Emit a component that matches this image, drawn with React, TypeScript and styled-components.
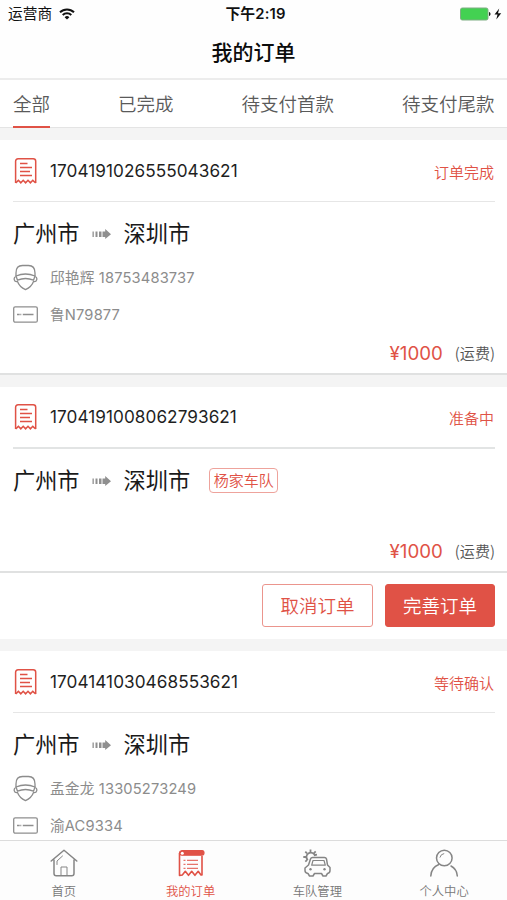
import React from "react";
import styled, { createGlobalStyle } from "styled-components";

const red = "#e05246";
const grey = "#8c8c8c";

const GlobalStyle = createGlobalStyle`
  * { box-sizing: border-box; }
  body {
    margin: 0;
    background: #f4f4f4;
    font-family: Inter, "Noto Sans CJK SC", sans-serif;
    color: #1c1c1c;
  }
`;

const Screen = styled.div`
  width: 507px;
  height: 900px;
  display: flex;
  flex-direction: column;
  overflow: hidden;
  background: #f4f4f4;
`;

const StatusBar = styled.div`
  height: 27px;
  flex: none;
  display: grid;
  grid-template-columns: 1fr auto 1fr;
  align-items: center;
  padding: 0 5px 0 8px;
  background: #fefefe;
  font-size: 14.7px;
  line-height: 27px;
  color: #111;
`;

const Carrier = styled.div`
  display: flex;
  align-items: center;
  gap: 7px;
  span { padding-top: 2px; line-height: 25px; }
`;

const Clock = styled.div`
  padding: 2px 0 0 1px;
  font-size: 14.8px;
  font-weight: 600;
  line-height: 25px;
  letter-spacing: 0.15px;
`;

const Power = styled.div`
  display: flex;
  justify-content: flex-end;
`;

const Header = styled.header`
  height: 53px;
  flex: none;
  display: flex;
  align-items: center;
  justify-content: center;
  background: #fefefe;
  border-bottom: 2px solid #ececec;
  font-size: 21px;
  font-weight: 500;
  line-height: 50px;
  color: #0c0c0c;
`;

const Tabs = styled.nav`
  height: 48px;
  flex: none;
  display: flex;
  justify-content: space-between;
  padding: 0 12.5px 0 13px;
  background: #fff;
  border-bottom: 1px solid #e4e4e4;
`;

const Tab = styled.div<{ $active?: boolean }>`
  height: 48px;
  font-size: 18.5px;
  font-weight: 350;
  line-height: 48px;
  color: #5a5a5a;
  border-bottom: 2px solid ${(p) => (p.$active ? red : "transparent")};
`;

const Orders = styled.main`
  flex: 1;
  min-height: 0;
  display: flex;
  flex-direction: column;
  gap: 12px;
  padding-top: 12px;
  overflow: hidden;
`;

const Card = styled.section<{ $height: number }>`
  height: ${(p) => p.$height}px;
  flex: none;
  display: flex;
  flex-direction: column;
  background: #fff;
`;

const CardHead = styled.div<{ $strong?: boolean }>`
  height: 62px;
  flex: none;
  display: flex;
  align-items: center;
  margin: 0 12px 0 13px;
  border-bottom: ${(p) => (p.$strong ? "2px solid #e2e4e4" : "1px solid #e6e6e6")};
`;

const OrderNo = styled.div`
  margin-left: 12px;
  font-size: 17.2px;
  letter-spacing: 0.05px;
  line-height: 24px;
  color: #1f1f1f;
`;

const Status = styled.div`
  margin-left: auto;
  padding: 4px 1px 0 0;
  font-size: 15px;
  line-height: 24px;
  font-weight: 350;
  color: ${red};
`;

const Route = styled.div`
  height: 63px;
  flex: none;
  display: flex;
  align-items: center;
  padding-left: 13px;
  font-size: 22.2px;
  font-weight: 400;
  line-height: 32px;
  color: #1a1a1a;
  svg { margin: 0 13px 0 12px; }
`;

const Team = styled.span`
  height: 25px;
  margin: -1px 0 0 19px;
  padding: 0 3.5px;
  border: 1px solid #eea39c;
  border-radius: 4px;
  font-size: 15px;
  font-weight: 350;
  line-height: 24px;
  color: ${red};
`;

const Detail = styled.div`
  height: 25px;
  flex: none;
  display: flex;
  align-items: center;
  gap: 12px;
  padding-left: 13px;
  font-size: 14.7px;
  letter-spacing: 0.15px;
  line-height: 22px;
  color: ${grey};
  & + & { margin-top: 12px; }
`;

const Price = styled.div`
  display: flex;
  flex: none;
  align-items: center;
  justify-content: flex-end;
  gap: 12px;
  height: 41px;
  margin-top: auto;
  padding-right: 12px;
  border-bottom: 2px solid #e0e1e1;
`;

const Amount = styled.span`
  font-size: 18.7px;
  line-height: 24px;
  color: ${red};
`;

const Fee = styled.span`
  padding-bottom: 4px;
  font-family: "Noto Sans CJK SC", sans-serif;
  font-size: 15.1px;
  font-weight: 350;
  line-height: 24px;
  color: #555;
`;

const Actions = styled.div`
  height: 66px;
  flex: none;
  display: flex;
  justify-content: flex-end;
  align-items: flex-start;
  gap: 12px;
  padding: 11px 12px 0 0;
`;

const Button = styled.button<{ $primary?: boolean }>`
  width: ${(p) => (p.$primary ? 110 : 111)}px;
  height: 43px;
  padding: 2px 0 0;
  border: 1px solid ${(p) => (p.$primary ? red : "#eb958d")};
  border-radius: 3px;
  background: ${(p) => (p.$primary ? red : "#fff")};
  color: ${(p) => (p.$primary ? "#fff" : red)};
  font-family: inherit;
  font-size: 18.5px;
  font-weight: 350;
  line-height: 39px;
`;

const BottomBar = styled.footer`
  height: 60px;
  flex: none;
  display: grid;
  grid-template-columns: repeat(4, 1fr);
  background: #fdfdfd;
  border-top: 1px solid #dcdcdc;
`;

const NavItem = styled.div<{ $active?: boolean }>`
  display: flex;
  flex-direction: column;
  align-items: center;
  gap: 6px;
  padding: 8px 0 0 1px;
  font-size: 12.3px;
  font-weight: 350;
  line-height: 17px;
  color: ${(p) => (p.$active ? red : "#777")};
`;

const WifiIcon = () => (
  <svg width="16" height="12" viewBox="0 0 16 12" fill="none" stroke="#111" strokeWidth="2">
    <path d="M1 4.300a10 10 0 0 1 14 0M3.700 7a6.200 6.200 0 0 1 8.600 0" />
    <path d="M8 11.600 5.600 9.200a3.400 3.400 0 0 1 4.800 0Z" fill="#111" stroke="none" />
  </svg>
);

const BatteryIcon = () => (
  <svg width="42" height="14" viewBox="0 0 42 14">
    <rect x=".5" y="1" width="27.500" height="12" rx="1.800" fill="#43d152" stroke="#7fae83" />
    <path d="M29 5c2 .5 2 3.500 0 4Z" fill="#222" />
    <path d="M39.200 1.500 34.500 7.600h3L36.300 12.500l4.900-6.300H38Z" fill="#111" />
  </svg>
);

const ReceiptIcon = () => (
  <svg width="25" height="28" viewBox="0 0 25 28" fill="none" stroke={red} strokeWidth="1.500">
    <path d="M2.600 26V4.300Q2.600 1.800 5.100 1.800H20.200Q22.700 1.800 22.700 4.300V26" />
    <path d="M2.600 26 5.400 23.300 7.800 25.800 10.200 23.300 12.600 25.800 15 23.300 17.400 25.800 19.800 23.300 22.700 26" strokeWidth="1.600" />
    <path d="M7 6.500h7.500M7 10.500h12M7 14.500h10M7 18.500h12" strokeWidth="1.500" />
  </svg>
);

const ArrowIcon = () => (
  <svg width="19" height="10" viewBox="0 0 19 10" fill="#8f8f8f">
    <path d="M.5 2.500h1.300v5.500H.5zM3.500 2.500h2v5.500h-2zM7 2.500h2.500v5.500H7zM10.500 2.500h2.700V0L19 5.200l-5.800 4.800V8h-2.700z" />
  </svg>
);

const DriverIcon = () => (
  <svg width="25" height="27" viewBox="0 0 25 27" fill="none" stroke="#8c8c8c" strokeWidth="1.300" strokeLinejoin="round">
    <path d="M3 12V9Q3 1.500 9.500 1.500h6Q22 1.500 22 9v3" />
    <path d="M3 12Q12.500 8 22 12L20.500 16.200Q12.500 12.800 4.500 16.200Z" />
    <path d="M2.700 12.500Q.7 13.500 1.300 15.800t3.200 1.700Q6.500 23 12.500 25.700 18.500 23 20.500 17.500q2.600.6 3.200-1.700t-1.400-3.300" />
  </svg>
);

const PlateIcon = () => (
  <svg width="25" height="17" viewBox="0 0 25 17" fill="none" stroke="#8f8f8f" strokeWidth="1.300">
    <rect x=".7" y=".8" width="23.600" height="15.400" rx="1.500" />
    <path d="M4 8.500h2.700M7.300 8.500h1M9.800 8.500h10.700" />
  </svg>
);

const HomeIcon = () => (
  <svg width="28" height="28" viewBox="0 0 28 28" fill="none" stroke="#858585" strokeWidth="1.500" strokeLinejoin="round" strokeLinecap="round">
    <path d="M1.200 12 14 1.200 26.800 12M4 11v13.500Q4 26.800 6.300 26.800h15.400Q24 26.800 24 24.500V11" />
    <path d="M11 26.500V18h6v8.500M7 15.500V12l5.500-5" strokeWidth="1" />
  </svg>
);

const OrdersIcon = () => (
  <svg width="28" height="28" viewBox="0 0 28 28" fill="none" stroke={red} strokeWidth="1.600" strokeLinejoin="round">
    <path d="M2.500 4v22.500l2.800-.5 3-3.700 3.200 4 3.200-4 3.200 4 3.300-4L24 26h1V7" />
    <path d="M5 1.500h20q2 0 2 2.300 0 2.400-2 2.400H5Q2.500 6 2.500 4T5 1.500Z" fill={red} strokeWidth="1.200" />
    <circle cx="5.300" cy="4.300" r="1.500" fill="#fff" stroke="none" />
    <path d="M6.500 11.300h2M10 11.300h11M6.500 15.300h2M10 15.300h11M6.500 19.300h2M10 19.300h11" strokeWidth="1" />
  </svg>
);

const CarIcon = () => (
  <svg width="28" height="28" viewBox="0 0 28 28" fill="none" stroke="#858585" strokeWidth="1.500" strokeLinejoin="round">
    <path d="M4.800 11.200a4.400 4.400 0 1 1 7.300-4.200M7.500 3V.5M11 4.200 12.700 2.400M4 4.300 2.300 2.600M2.900 8H.3M4 11.200l-1.700 1.500M12 6l2-.3" strokeWidth="1.800" />
    <path d="M5.500 16 7.500 10Q8 8.500 9.500 8.500h12q1.500 0 2 1.500L24.500 16 27 18.500v3q0 2.500-2.500 3L23 27h-3L18.500 24.500H11.500L10 27H6.500L5 24.500Q2 24 2 21.500V19Z" />
    <path d="M10 11.500h11l1.300 4.700H8.700Z" strokeWidth="1.200" />
    <circle cx="7.500" cy="20.300" r="1.200" fill="#858585" stroke="none" />
    <circle cx="21.500" cy="20.300" r="1.200" fill="#858585" stroke="none" />
  </svg>
);

const PersonIcon = () => (
  <svg width="28" height="28" viewBox="0 0 28 28" fill="none" stroke="#858585" strokeWidth="1.500" strokeLinecap="round">
    <circle cx="14.300" cy="9" r="7.800" />
    <path d="M10 8.200Q10.700 5 13.800 4.600" strokeWidth="1" />
    <path d="M.8 27Q1.200 18.500 8.800 15.500M21 17Q26.800 20 27.300 27" />
  </svg>
);

type CardProps = {
  number: string;
  status: string;
  height: number;
  team?: string;
  driver?: string;
  plate?: string;
  price?: string;
  actions?: boolean;
  strong?: boolean;
};

const OrderCard = ({ number, status, height, team, driver, plate, price, actions, strong }: CardProps) => (
  <Card $height={height}>
    <CardHead $strong={strong}>
      <ReceiptIcon />
      <OrderNo>{number}</OrderNo>
      <Status>{status}</Status>
    </CardHead>
    <Route>
      <span>广州市</span>
      <ArrowIcon />
      <span>深圳市</span>
      {team && <Team>{team}</Team>}
    </Route>
    {driver && (
      <Detail>
        <DriverIcon />
        <span>{driver}</span>
      </Detail>
    )}
    {plate && (
      <Detail>
        <PlateIcon />
        <span>{plate}</span>
      </Detail>
    )}
    {price && (
      <Price>
        <Amount>{price}</Amount>
        <Fee>(运费)</Fee>
      </Price>
    )}
    {actions && (
      <Actions>
        <Button>取消订单</Button>
        <Button $primary>完善订单</Button>
      </Actions>
    )}
  </Card>
);

export default function App() {
  return (
    <>
      <GlobalStyle />
      <Screen>
        <StatusBar>
          <Carrier>
            <span>运营商</span>
            <WifiIcon />
          </Carrier>
          <Clock>下午2:19</Clock>
          <Power>
            <BatteryIcon />
          </Power>
        </StatusBar>
        <Header>我的订单</Header>
        <Tabs>
          <Tab $active>全部</Tab>
          <Tab>已完成</Tab>
          <Tab>待支付首款</Tab>
          <Tab>待支付尾款</Tab>
        </Tabs>
        <Orders>
          <OrderCard number="1704191026555043621" status="订单完成" height={235} driver="邱艳辉 18753483737" plate="鲁N79877" price="¥1000" />
          <OrderCard number="1704191008062793621" status="准备中" height={252} team="杨家车队" price="¥1000" actions strong />
          <OrderCard number="1704141030468553621" status="等待确认" height={235} driver="孟金龙 13305273249" plate="渝AC9334" />
        </Orders>
        <BottomBar>
          <NavItem>
            <HomeIcon />
            首页
          </NavItem>
          <NavItem $active>
            <OrdersIcon />
            我的订单
          </NavItem>
          <NavItem>
            <CarIcon />
            车队管理
          </NavItem>
          <NavItem>
            <PersonIcon />
            个人中心
          </NavItem>
        </BottomBar>
      </Screen>
    </>
  );
}
